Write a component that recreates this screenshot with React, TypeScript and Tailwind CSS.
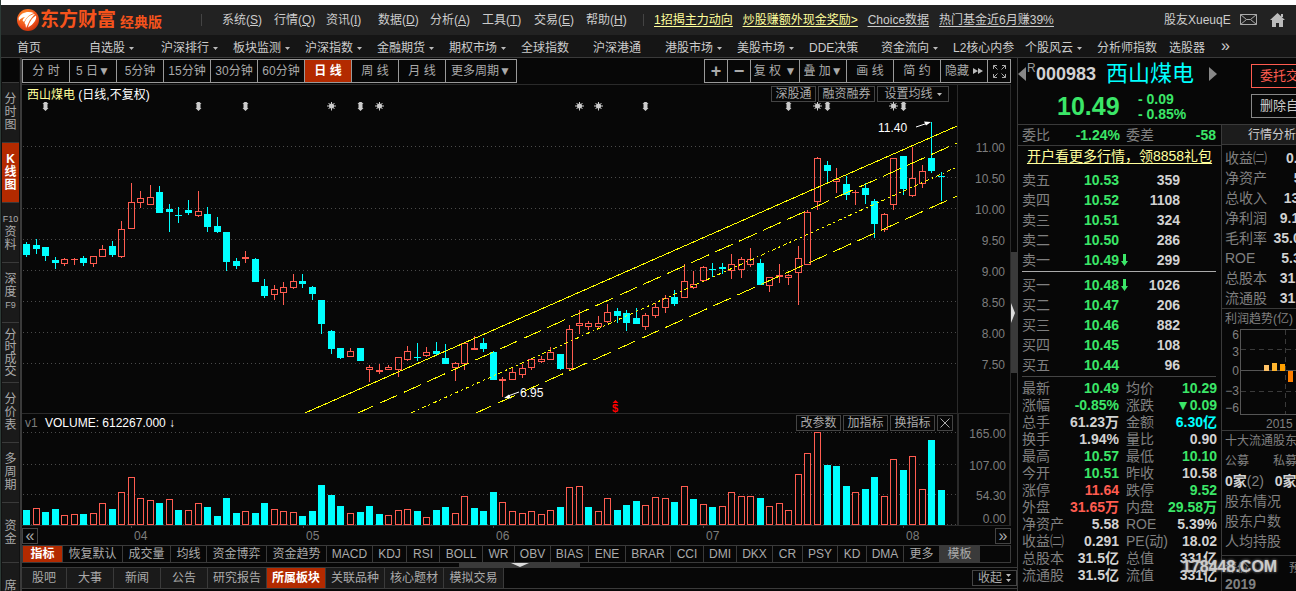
import React from 'react';
import clsx from 'clsx';

// [high, bodyTop, bodyBottom, low, rising, volumeTop, volumeRising]
type Bar = [number, number, number, number, 0 | 1, number, 0 | 1];

const bars: Bar[] = [
  [242, 244, 255, 257, 0, 510, 0],
  [239, 245, 249, 254, 0, 508, 1],
  [247, 247, 256, 261, 0, 512, 0],
  [257, 260, 263, 269, 0, 509, 0],
  [258, 259, 264, 266, 1, 515, 1],
  [258, 259, 260, 265, 1, 514, 1],
  [256, 258, 263, 266, 0, 514, 0],
  [256, 256, 264, 267, 1, 513, 1],
  [245, 249, 257, 257, 1, 503, 1],
  [241, 246, 255, 257, 0, 509, 0],
  [221, 229, 257, 258, 1, 492, 1],
  [183, 202, 229, 229, 1, 477, 1],
  [191, 198, 203, 208, 1, 498, 1],
  [185, 197, 205, 205, 1, 500, 1],
  [186, 192, 213, 213, 0, 503, 0],
  [204, 209, 212, 232, 0, 499, 1],
  [207, 215, 216, 223, 0, 510, 0],
  [200, 210, 213, 215, 0, 510, 1],
  [191, 211, 216, 217, 1, 503, 1],
  [207, 214, 227, 232, 0, 507, 0],
  [217, 226, 232, 233, 0, 516, 0],
  [232, 232, 262, 271, 0, 498, 0],
  [258, 261, 266, 269, 0, 513, 0],
  [251, 257, 259, 263, 1, 511, 1],
  [258, 259, 282, 282, 0, 513, 0],
  [279, 286, 296, 298, 0, 503, 0],
  [285, 289, 295, 300, 1, 509, 1],
  [282, 287, 293, 305, 1, 511, 1],
  [274, 281, 288, 289, 1, 512, 1],
  [274, 281, 284, 288, 0, 516, 0],
  [286, 287, 294, 300, 0, 511, 0],
  [300, 300, 324, 334, 0, 485, 0],
  [330, 331, 349, 354, 0, 495, 0],
  [348, 348, 358, 359, 0, 506, 0],
  [348, 351, 357, 357, 1, 513, 1],
  [348, 348, 361, 361, 0, 512, 0],
  [365, 367, 370, 382, 1, 506, 0],
  [364, 370, 372, 374, 1, 514, 0],
  [365, 367, 370, 370, 1, 515, 1],
  [357, 357, 370, 377, 1, 510, 1],
  [346, 351, 360, 361, 1, 509, 1],
  [343, 357, 358, 361, 0, 511, 0],
  [347, 352, 356, 357, 1, 517, 1],
  [342, 351, 354, 356, 0, 510, 0],
  [344, 358, 364, 364, 0, 507, 0],
  [362, 363, 368, 381, 1, 513, 1],
  [343, 343, 364, 370, 1, 496, 1],
  [336, 348, 350, 350, 1, 508, 0],
  [338, 343, 349, 352, 0, 511, 0],
  [351, 352, 380, 380, 0, 492, 0],
  [377, 379, 381, 397, 1, 502, 1],
  [367, 372, 380, 380, 1, 511, 1],
  [364, 368, 375, 378, 1, 513, 1],
  [358, 359, 368, 370, 1, 511, 1],
  [356, 359, 362, 363, 1, 514, 1],
  [347, 352, 360, 360, 1, 510, 1],
  [354, 354, 369, 370, 0, 507, 0],
  [325, 329, 369, 370, 1, 487, 1],
  [310, 323, 326, 334, 1, 486, 1],
  [321, 323, 327, 330, 1, 507, 0],
  [316, 323, 327, 328, 1, 511, 1],
  [304, 312, 322, 323, 1, 498, 1],
  [308, 311, 316, 323, 0, 510, 0],
  [310, 313, 323, 331, 0, 505, 0],
  [308, 318, 324, 324, 0, 501, 0],
  [313, 315, 327, 330, 1, 505, 1],
  [303, 307, 316, 318, 1, 497, 1],
  [295, 298, 308, 313, 1, 498, 1],
  [290, 297, 304, 306, 0, 502, 0],
  [264, 281, 298, 298, 1, 486, 1],
  [271, 284, 288, 289, 1, 499, 0],
  [266, 267, 281, 281, 1, 504, 1],
  [263, 269, 270, 277, 0, 507, 0],
  [263, 267, 269, 274, 0, 506, 1],
  [254, 264, 271, 279, 1, 492, 1],
  [257, 259, 270, 278, 1, 496, 1],
  [248, 259, 265, 267, 1, 496, 1],
  [259, 263, 285, 285, 0, 498, 0],
  [277, 277, 286, 292, 1, 506, 1],
  [264, 275, 277, 283, 1, 503, 1],
  [274, 275, 278, 285, 1, 510, 1],
  [246, 258, 273, 305, 1, 474, 1],
  [210, 212, 265, 265, 1, 453, 1],
  [157, 158, 202, 210, 1, 432, 1],
  [161, 165, 171, 182, 0, 465, 0],
  [168, 179, 182, 193, 1, 466, 0],
  [176, 184, 195, 200, 0, 486, 0],
  [190, 192, 193, 205, 1, 492, 1],
  [183, 188, 195, 204, 0, 489, 0],
  [199, 201, 224, 238, 0, 477, 0],
  [213, 214, 230, 232, 1, 496, 1],
  [158, 158, 205, 210, 1, 459, 1],
  [156, 156, 189, 195, 0, 470, 0],
  [147, 178, 196, 197, 1, 456, 1],
  [165, 171, 184, 188, 1, 489, 1],
  [122, 158, 171, 173, 0, 440, 0],
  [172, 176, 177, 201, 0, 490, 0],
];

const RED = '#ff5c50';
const CYAN = '#00ffff';

const barX = (i: number) => Math.round(26 + i * 9.53);

const menus = [
  ['系统', 'S'], ['行情', 'Q'], ['资讯', 'I'], ['数据', 'D'],
  ['分析', 'A'], ['工具', 'T'], ['交易', 'E'], ['帮助', 'H'],
];

const navItems = [
  '首页', '自选股▾', '沪深排行▾', '板块监测▾', '沪深指数▾', '金融期货▾', '期权市场▾', '全球指数',
  '沪深港通', '港股市场▾', '美股市场▾', 'DDE决策', '资金流向▾', 'L2核心内参', '个股风云▾', '分析师指数',
];

const sideTabs = [
  ['分', '时', '图'], ['K', '线', '图'], ['F10', '资', '料'], ['深', '度', 'F9'],
  ['分', '时', '成', '交'], ['分', '价', '表'], ['多', '周', '期'], ['资', '金'], ['席', '位'],
];

const periods = ['分 时', '5 日▼', '5分钟', '15分钟', '30分钟', '60分钟', '日 线', '周 线', '月 线'];

const indicators: [string, string][] = [
  ['指标', 'w-10'], ['恢复默认', 'w-[60px]'], ['成交量', 'w-12'], ['均线', 'w-9'], ['资金博弈', 'w-[60px]'],
  ['资金趋势', 'w-[60px]'], ['MACD', 'w-[46px]'], ['KDJ', 'w-[34px]'], ['RSI', 'w-[33px]'], ['BOLL', 'w-[43px]'],
  ['WR', 'w-[32px]'], ['OBV', 'w-9'], ['BIAS', 'w-[38px]'], ['ENE', 'w-[37px]'], ['BRAR', 'w-[45px]'],
  ['CCI', 'w-[33px]'], ['DMI', 'w-[33px]'], ['DKX', 'w-9'], ['CR', 'w-[30px]'], ['PSY', 'w-[35px]'],
  ['KD', 'w-[29px]'], ['DMA', 'w-[37px]'], ['更多', 'w-9'], ['模板', 'w-10'],
];

const bottomTabs: [string, string][] = [
  ['股吧', 'w-[45px]'], ['大事', 'w-[47px]'], ['新闻', 'w-[47px]'], ['公告', 'w-[47px]'], ['研究报告', 'w-[59px]'],
  ['所属板块', 'w-[59px]'], ['关联品种', 'w-[59px]'], ['核心题材', 'w-[59px]'], ['模拟交易', 'w-[60px]'],
];

const sells = [['卖五', '10.53', '359'], ['卖四', '10.52', '1108'], ['卖三', '10.51', '324'], ['卖二', '10.50', '286'], ['卖一', '10.49', '299']];
const buys = [['买一', '10.48', '1026'], ['买二', '10.47', '206'], ['买三', '10.46', '882'], ['买四', '10.45', '108'], ['买五', '10.44', '96']];

const G = 'text-[#3be668]';
const W = 'text-[#d2d2d2]';
const R = 'text-[#ff5c50]';
const C = 'text-[#00ffff]';

const details: [string, string, string, string, string, string][] = [
  ['最新', '10.49', G, '均价', '10.29', G],
  ['涨幅', '-0.85%', G, '涨跌', '▼0.09', G],
  ['总手', '61.23万', W, '金额', '6.30亿', C],
  ['换手', '1.94%', W, '量比', '0.90', W],
  ['最高', '10.57', G, '最低', '10.10', G],
  ['今开', '10.51', G, '昨收', '10.58', W],
  ['涨停', '11.64', R, '跌停', '9.52', G],
  ['外盘', '31.65万', R, '内盘', '29.58万', G],
  ['净资产', '5.58', W, 'ROE', '5.39%', W],
  ['收益㈡', '0.291', W, 'PE(动)', '18.02', W],
  ['总股本', '31.5亿', W, '总值', '331亿', W],
  ['流通股', '31.5亿', W, '流值', '331亿', W],
];

const finance = [
  ['收益㈡', '0.291'], ['净资产', '5.58'], ['总收入', '132亿'], ['净利润', '9.17亿'],
  ['毛利率', '35.02%'], ['ROE', '5.39%'], ['总股本', '31.5亿'], ['流通股', '31.5亿'],
];

const Logo = () => (
  <svg width="22" height="22" viewBox="0 0 22 22">
    <defs>
      <radialGradient id="ball" cx="0.4" cy="0.3" r="0.8">
        <stop offset="0" stopColor="#ff9a2e" />
        <stop offset="0.6" stopColor="#f0501a" />
        <stop offset="1" stopColor="#b92a08" />
      </radialGradient>
    </defs>
    <circle cx="11" cy="11" r="11" fill="url(#ball)" />
    <path d="M1.500 9C4 4 10 1.500 17 4C13 5 9.500 8 7 13L5.500 11.500C6 10 7 9 8 8C5 8.500 3 10 2 12Z" fill="#fff" />
    <path d="M7.500 14C9 9 13 5.500 18 5C16 7 13 10 11 15L9 19L8.500 15.500Z" fill="#fff" />
    <path d="M12 15C14 11 16 8 19 6.500C20 10 17 15 11 18.500Z" fill="#fff" />
  </svg>
);

const Caret = () => (
  <svg width="5" height="3" className="ml-1 shrink-0"><path d="M0 0h5l-2.5 3z" fill="#bbb" /></svg>
);

const Split = ({ x }: { x: number }) => (
  <path d={`M${x} 101l3 3h-1v4h1l-3 3l-3 -3h1v-4h-1z`} fill="#ccc" />
);

const Star = ({ x }: { x: number }) => (
  <g stroke="#ccc" strokeWidth="1">
    <circle cx={x} cy="106" r="2.5" fill="#ccc" stroke="none" />
    <path d={`M${x - 4.5} 106h9M${x} 101.5v9M${x - 3} 103l6 6M${x + 3} 103l-6 6`} />
  </g>
);

const PriceChart = () => (
  <svg className="block w-full h-[311px]" role="img" aria-label="日线">
    <g transform="translate(-22 -102)">
      <g stroke="#4a4a4a" strokeDasharray="1 3" shapeRendering="crispEdges">
        {[146, 177, 208, 239, 270, 301, 332, 363].map(y => (
          <line key={y} x1="23" x2="110%" y1={y + 0.5} y2={y + 0.5} />
        ))}
      </g>
      {[45, 198, 245, 360, 645, 788, 827, 903].map(x => <Split key={x} x={x + 0.5} />)}
      {[331, 379, 579, 598, 817, 893].map(x => <Star key={x} x={x + 0.5} />)}
      <g shapeRendering="crispEdges">
        {bars.map(([high, top, bottom, low, up], i) => {
          const x = barX(i);
          const h = Math.max(1, bottom - top);
          const color = up ? RED : CYAN;
          return (
            <g key={i}>
              {top > high && <rect x={x} y={high} width="1" height={top - high} fill={color} />}
              {low > bottom && <rect x={x} y={bottom} width="1" height={low - bottom} fill={color} />}
              {up && h > 2 ? (
                <rect x={x - 2.5} y={top + 0.5} width="6" height={h - 1} fill="none" stroke={color} />
              ) : (
                <rect x={x - 3} y={top} width="7" height={h} fill={color} />
              )}
            </g>
          );
        })}
      </g>
      {/* 回归通道 */}
      <g stroke="#ffff00" fill="none" shapeRendering="crispEdges">
        <path d="M305 413L957 126" />
        <path d="M358 413L957 143" strokeDasharray="19.4 6.9" strokeDashoffset="2.6" />
        <path d="M411 413L957 167" strokeDasharray="4 3 2 3" />
        <path d="M476 413L957 196" strokeDasharray="19.4 6.9" strokeDashoffset="2.6" />
      </g>
      <g fill="#fff" fontSize="12" fontFamily="Liberation Sans">
        <text x="878" y="132">11.40</text>
        <text x="520" y="397">6.95</text>
      </g>
      <path d="M916 127L928 123M519 392L508 396" stroke="#fff" />
      <path d="M931 122l-7 -0.5l2 4zM504 398l7 0.5l-2 -4z" fill="#fff" />
      <path d="M615.5 400l3 3h-6z" fill="#f00" />
      <text x="612" y="412" fill="#f00" fontSize="11" fontWeight="bold" fontFamily="Liberation Sans">$</text>
    </g>
  </svg>
);

const VolumeChart = () => (
  <svg className="block w-full h-[94px]" role="img" aria-label="成交量">
    <g transform="translate(-22 -431)" shapeRendering="crispEdges">
      <g stroke="#4a4a4a" strokeDasharray="1 3">
        {[432, 464, 494, 524].map(y => (
          <line key={y} x1="23" x2="110%" y1={y + 0.5} y2={y + 0.5} />
        ))}
      </g>
      {bars.map((b, i) => b[6] ? (
        <rect key={i} x={barX(i) - 2.5} y={b[5] + 0.5} width="6" height={524 - b[5]} fill="#070707" stroke={RED} />
      ) : (
        <rect key={i} x={barX(i) - 3} y={b[5]} width="7" height={525 - b[5]} fill={CYAN} />
      ))}
    </g>
  </svg>
);

const AxisText = ({ labels }: { labels: [string, number][] }) => (
  <g fill="#7d7d7d" fontSize="12" fontFamily="Liberation Sans" textAnchor="end">
    {labels.map(([text, y]) => <text key={text} x="47" y={y}>{text}</text>)}
  </g>
);

const Header = () => (
  <header>
    <div className="h-[5px] bg-white" />
    <div className="flex items-center h-[30px] bg-[#222] pl-4 pr-[10px] text-[#ccc]">
      <Logo />
      <h1 className="flex items-center text-[19px] leading-6 font-bold text-[#f5531c] pl-px w-[162px]">
        东方财富<span className="text-sm pl-1 pt-1">经典版</span>
      </h1>
      <i className="w-px h-3 bg-[#444]" />
      <nav className="flex pl-5">
        {menus.map(([name, key]) => (
          <button key={key} className="w-[52px] text-left whitespace-nowrap">{name}(<u>{key}</u>)</button>
        ))}
      </nav>
      <i className="w-px h-3 bg-[#444] ml-[5px]" />
      <div className="flex gap-[10px] pl-[10px] underline underline-offset-2 whitespace-nowrap">
        <a href="#" className="text-[#ffff9c]">1招揭主力动向</a>
        <a href="#" className="text-[#ffff9c]">炒股赚额外现金奖励&gt;</a>
        <a href="#">Choice数据</a>
        <a href="#">热门基金近6月赚39%</a>
      </div>
      <span className="ml-auto w-[76px] whitespace-nowrap">股友XueuqE</span>
      <button aria-label="邮件" className="mr-3">
        <svg width="18" height="12" fill="none" stroke="#aaa">
          <path d="M0.5 0.5h16v10h-16zM0.5 0.5l6 5h4l6 -5M0.5 10.5l6 -5M16.5 10.5l-6 -5" />
        </svg>
      </button>
      <button aria-label="主页">
        <svg width="16" height="14" fill="#bbb">
          <path d="M7.5 0L15 7h-2v7h-4v-4h-3v4h-4v-7h-2zM11 1h2v3h-2z" />
        </svg>
      </button>
    </div>
    <nav className="flex items-center h-[23px] bg-[#151515] border-b border-[#3a3a3a] pl-4 text-[#ccc] whitespace-nowrap">
      {navItems.map(item => (
        <a key={item} href="#" className="flex items-center w-[72px] shrink-0 pt-1">
          {item.replace('▾', '')}
          {item.endsWith('▾') && <Caret />}
        </a>
      ))}
      <a href="#" className="w-[52px] shrink-0 pt-1">选股器</a>
      <button className="text-base leading-4">»</button>
    </nav>
  </header>
);

const toolButton = 'flex items-center justify-center h-6 border border-[#999] -ml-px whitespace-nowrap shrink-0';
const smallButton = 'flex items-center justify-center h-4 border border-[#444] bg-[#070707] text-[#aaa]';

const Toolbar = () => (
  <div className="flex h-[26px] pt-px pl-px pr-[6px] text-[#aaa]">
    {periods.map(p => (
      <button key={p} className={clsx(toolButton, 'w-12', p === '日 线' && 'bg-[#b32a00] text-white font-bold')}>
        {p}
      </button>
    ))}
    <button className={clsx(toolButton, 'w-[72px] mr-auto')}>更多周期▼</button>
    <button className={clsx(toolButton, 'w-6 text-lg font-bold')}>+</button>
    <button className={clsx(toolButton, 'w-6 text-lg font-bold')}>−</button>
    <button className={clsx(toolButton, 'w-[50px]')}>复 权 ▼</button>
    <button className={clsx(toolButton, 'w-12')}>叠 加▼</button>
    <button className={clsx(toolButton, 'w-12')}>画 线</button>
    <button className={clsx(toolButton, 'w-12')}>简 约</button>
    <button className={clsx(toolButton, 'w-12 gap-1')}>
      隐藏
      <svg width="10" height="6" fill="#bbb"><path d="M0 0l5 3l-5 3zM5 0l5 3l-5 3z" /></svg>
    </button>
    <button aria-label="全屏" className={clsx(toolButton, 'w-6')}>
      <svg width="13" height="13" fill="none" stroke="#aaa">
        <path d="M0.5 4v-3.5h3.5M0.5 0.5l4 4M9 0.5h3.5v3.5M12.5 0.5l-4 4M0.5 9v3.5h3.5M0.5 12.5l4 -4M12.5 9v3.5h-3.5M12.5 12.5l-4 -4" />
      </svg>
    </button>
  </div>
);

const Charts = () => (
  <div className="flex">
    <section className="flex-1 min-w-0 border-t border-[#2a2a2a]">
      <div className="flex border-b border-[#2a2a2a]">
        <div className="flex-1 min-w-0">
          <div className="flex h-[17px] pl-[5px] pt-px pr-[8px] gap-0.5 text-white">
            <h2 className="mr-auto leading-[18px]"><span className="text-[#ffff9c]">西山煤电</span> (日线,不复权)</h2>
            <button className={clsx(smallButton, 'w-[45px]')}>深股通</button>
            <button className={clsx(smallButton, 'w-[57px]')}>融资融券</button>
            <button className={clsx(smallButton, 'w-[72px]')}>设置均线 <Caret /></button>
          </div>
          <PriceChart />
        </div>
        <svg className="w-[54px] h-[328px] border-x border-[#2a2a2a] shrink-0">
          <AxisText
            labels={[['11.00', 67], ['10.50', 98], ['10.00', 129], ['9.50', 160], ['9.00', 191], ['8.50', 222], ['8.00', 253], ['7.50', 284]]}
          />
        </svg>
      </div>
      <div className="flex border-b border-[#2a2a2a]">
        <div className="flex-1 min-w-0">
          <div className="flex h-[17px] pl-[3px] pt-px pr-1 gap-0.5">
            <span className="text-[#7d7d7d] w-[18px] leading-4">v1</span>
            <span className="text-white mr-auto leading-4">VOLUME: 612267.000 ↓</span>
            <button className={clsx(smallButton, 'w-[45px]')}>改参数</button>
            <button className={clsx(smallButton, 'w-[45px]')}>加指标</button>
            <button className={clsx(smallButton, 'w-[45px]')}>换指标</button>
            <button aria-label="关闭" className={clsx(smallButton, 'w-4')}>
              <svg width="10" height="10" stroke="#aaa"><path d="M0.5 0.5l9 9M9.5 0.5l-9 9" /></svg>
            </button>
          </div>
          <VolumeChart />
        </div>
        <svg className="w-[54px] h-[111px] border-x-2 border-[#2a2a2a] shrink-0">
          <AxisText labels={[['165.00', 24], ['107.00', 56], ['54.30', 86], ['0.00', 109]]} />
        </svg>
      </div>
      <div className="flex items-center h-[19px]">
        <button className={clsx(smallButton, 'w-4 text-base')}>«</button>
        <svg className="flex-1 h-[19px]" fill="#7d7d7d" fontSize="12">
          {([['04', 93], ['05', 265], ['06', 455], ['07', 665], ['08', 865]] as [string, number][]).map(([m, x]) => (
            <g key={m}>
              <path d={`M${x + 0.5} 0v2`} stroke="#444" />
              <text x={x + 3} y="14">{m}</text>
            </g>
          ))}
        </svg>
        <button className={clsx(smallButton, 'w-4 text-base')}>»</button>
      </div>
      <div className="flex h-[18px] border border-[#3a3a3a] text-[#aaa] overflow-hidden">
        {indicators.map(([name, width]) => (
          <button
            key={name}
            className={clsx(
              'shrink-0 leading-4 border-r border-[#3a3a3a] whitespace-nowrap',
              width,
              name === '指标' && 'bg-[#b32a00] text-white font-bold',
              name === '模板' && 'bg-[#3a3a3a]',
            )}
          >
            {name}
          </button>
        ))}
      </div>
    </section>
    <div className="flex items-center w-[6px]">
      <button aria-label="展开" className="w-[6px] h-[121px] bg-[#3a3a3a] mb-[22px]">
        <svg width="5" height="20" fill="#ddd"><path d="M0 0l4 10l-4 10z" /></svg>
      </button>
    </div>
  </div>
);

const QuoteHeader = () => (
  <div className="flex h-[67px] border-b border-[#3a3a3a]">
    <div className="w-[233px] shrink-0">
      <div className="flex items-center h-8 text-[#d2d2d2]">
        <svg width="8" height="14" fill="#888"><path d="M8 0v14l-8 -7z" /></svg>
        <span className="text-[#999] pl-px w-[10px] leading-3 pb-3">R</span>
        <strong className="text-lg leading-6 w-[70px]">000983</strong>
        <span className="text-[22px] leading-6 text-[#00ffff] w-[103px]">西山煤电</span>
        <svg width="8" height="14" fill="#888"><path d="M0 0v14l8 -7z" /></svg>
      </div>
      <div className="flex items-center font-bold text-[#3be668] pl-[39px]">
        <span className="text-[25px] leading-8 w-[81px]">10.49</span>
        <span className="text-sm leading-[15px] pt-0.5">- 0.09<br />- 0.85%</span>
      </div>
    </div>
    <div className="flex flex-col gap-[6px] pt-[6px] text-[13px]">
      <button className="w-[70px] h-6 border border-[#ff5c50] text-[#ff5c50]">委托交易</button>
      <button className="w-[70px] h-6 border border-[#888] text-[#ccc]">删除自选</button>
    </div>
  </div>
);

const OrderBook = ({ rows, arrow }: { rows: string[][]; arrow: string }) => (
  <table className="table-fixed w-[199px] text-sm leading-5">
    <tbody>
      {rows.map(([label, price, volume]) => (
        <tr key={label} className="h-5">
          <th className="w-[50px] p-0 text-left font-normal text-[#808080]">{label}</th>
          <td className="w-[47px] p-0 text-right font-bold text-[#3be668]">{price}</td>
          <td className="w-3 p-0 pl-0.5">
            {label === arrow && (
              <svg width="7" height="12" fill="#3be668"><path d="M2 0h3v7h2l-3.5 5l-3.5 -5h2z" /></svg>
            )}
          </td>
          <td className="w-[49px] p-0 text-right font-bold text-[#d2d2d2]">{volume}</td>
          <td />
        </tr>
      ))}
    </tbody>
  </table>
);

const QuotePanel = () => (
  <div className="w-[204px] shrink-0 border-r border-[#3a3a3a]">
    <div className="flex h-[21px] items-center pl-1 pr-[5px] text-sm border-b border-[#3a3a3a] text-[#808080]">
      <span className="w-[42px]">委比</span>
      <b className="w-[56px] text-right text-[#3be668]">-1.24%</b>
      <span className="pl-[6px]">委差</span>
      <b className="ml-auto text-[#3be668]">-58</b>
    </div>
    <a href="#" className="block h-6 leading-5 text-center text-sm text-[#ffff9c] underline underline-offset-2 whitespace-nowrap">
      开户看更多行情，领8858礼包
    </a>
    <div className="pl-1 pr-[5px]">
      <OrderBook rows={sells} arrow="卖一" />
      <hr className="border-[#aaa] mt-px mb-[3px]" />
      <OrderBook rows={buys} arrow="买一" />
      <hr className="border-[#444] mt-px mb-[3px]" />
      <table className="table-fixed w-[195px] text-sm leading-[17px]">
        <tbody>
          {details.map(([a, av, ac, b, bv, bc]) => (
            <tr key={a} className="h-[17px] whitespace-nowrap">
              <th className="w-[43px] p-0 text-left font-normal text-[#808080]">{a}</th>
              <td className={clsx('w-[54px] p-0 text-right font-bold', ac)}>{av}</td>
              <th className="w-[48px] p-0 pl-[7px] text-left font-normal text-[#808080]">{b}</th>
              <td className={clsx('w-[50px] p-0 text-right font-bold', bc)}>{bv}</td>
            </tr>
          ))}
        </tbody>
      </table>
    </div>
  </div>
);

const ProfitChart = () => (
  <svg className="block w-[99px] h-[102px]" fill="#808080" fontSize="12" shapeRendering="crispEdges">
    <path d="M18.5 1v85.500H99M18.5 1.500H99M18 42.500H99" stroke="#555" fill="none" />
    <path d="M19 21.500H99M19 63.500H99M63.5 2v84" stroke="#3a3a3a" strokeDasharray="5 4" fill="none" />
    <g textAnchor="end">
      <text x="17" y="11">6</text>
      <text x="17" y="28">3</text>
      <text x="17" y="47">0</text>
      <text x="17" y="67">−3</text>
      <text x="17" y="84">−6</text>
    </g>
    <rect x="42" y="37" width="5" height="6" fill="#ffc266" />
    <rect x="50" y="35" width="5" height="8" fill="#ffb52e" />
    <rect x="58" y="36" width="5" height="7" fill="#ffa000" />
    <rect x="66" y="43" width="5" height="11" fill="#ff7f00" />
    <text x="44" y="100">2015</text>
  </svg>
);

const FinancePanel = () => (
  <div className="relative w-[99px] shrink-0 text-sm text-[#808080] whitespace-nowrap">
    <h3 className="h-5 leading-5 bg-[#1c1c1c] border-b border-[#3a3a3a] text-xs text-[#ccc] pl-[26px]">行情分析</h3>
    <dl className="pt-[3px] pl-[3px]">
      {finance.map(([label, value]) => (
        <div key={label} className="flex justify-between h-5 leading-5">
          <dt>{label}</dt>
          <dd className="font-bold text-[#d2d2d2]">{value}</dd>
        </div>
      ))}
    </dl>
    <h4 className="border-t border-[#3a3a3a] h-5 leading-5 text-xs pl-[3px]">利润趋势(亿)</h4>
    <ProfitChart />
    <div className="border-t border-[#3a3a3a] pl-[3px] leading-5">
      <h4 className="text-xs leading-5">十大流通股东</h4>
      <p className="text-xs leading-5"><span className="inline-block w-12">公募</span>私募</p>
      <p><b className="text-[#d2d2d2]">0家</b><span className="inline-block w-7">(2)</span><b className="text-[#d2d2d2]">0家</b></p>
      <p>股东情况</p>
      <p>股东户数</p>
      <p>人均持股</p>
    </div>
    <div className="border-t border-[#3a3a3a] pl-[3px] leading-4 pt-1 mt-1">
      <p className="text-xs leading-4"><span className="inline-block w-16">评价</span>预测</p>
      <p className="font-bold">2019</p>
    </div>
  </div>
);

export default function App() {
  return (
    <div className="flex flex-col h-screen overflow-hidden bg-[#070707] border-l border-[#2c3a36] text-xs font-['Liberation_Sans','Noto_Sans_CJK_SC',sans-serif]">
      <Header />
      <div className="flex flex-1 min-h-0 overflow-hidden">
        <nav className="flex flex-col w-[21px] shrink-0 border-r-2 border-[#3a3a3a] pl-px pr-px bg-[#111] overflow-hidden">
          <div className="h-[25px] shrink-0 bg-[#070707] border-b border-[#3a3a3a]" />
          {sideTabs.map(chars => (
            <button
              key={chars.join('')}
              className={clsx(
                'flex flex-col items-center justify-center h-[60px] shrink-0 border-b border-[#3a3a3a]',
                chars.length > 3 ? 'leading-3' : 'leading-[13px]',
                chars[0] === 'K' ? 'bg-[#b32a00] text-white font-bold' : 'bg-[#1a1a1a] text-[#aaa]',
              )}
            >
              {chars.map(ch => <span key={ch} className={ch.startsWith('F') ? 'text-[9px]' : undefined}>{ch}</span>)}
            </button>
          ))}
        </nav>
        <main className="flex-1 min-w-0">
          <Toolbar />
          <Charts />
          <div className="flex justify-center h-[5px] border-b border-[#3a3a3a]">
            <div className="flex justify-center w-[121px] bg-[#3a3a3a]">
              <svg width="18" height="4" fill="#ddd"><path d="M0 0h18l-9 4z" /></svg>
            </div>
          </div>
          <div className="flex h-[21px] border-b border-[#3a3a3a] text-[#aaa]">
            {bottomTabs.map(([name, width]) => (
              <button
                key={name}
                className={clsx(
                  'leading-5 border-r border-[#3a3a3a] shrink-0',
                  width,
                  name === '所属板块' ? 'bg-[#b32a00] text-white font-bold' : 'bg-[#1a1a1a]',
                )}
              >
                {name}
              </button>
            ))}
            <button className={clsx(smallButton, 'w-[45px] ml-auto mt-0.5 gap-1')}>
              收起
              <svg width="5" height="8" fill="#bbb"><path d="M0 0h5l-2.5 3zM0 5h5l-2.5 3z" /></svg>
            </button>
          </div>
        </main>
        <aside className="w-[279px] shrink-0 border-l border-[#3a3a3a] overflow-hidden">
          <QuoteHeader />
          <div className="relative flex">
            <QuotePanel />
            <FinancePanel />
            <span className="absolute left-[164px] top-[430px] text-base leading-6 font-bold text-[#ccc] [text-shadow:0_0_3px_#999]">
              178448.COM
            </span>
          </div>
        </aside>
      </div>
    </div>
  );
}
